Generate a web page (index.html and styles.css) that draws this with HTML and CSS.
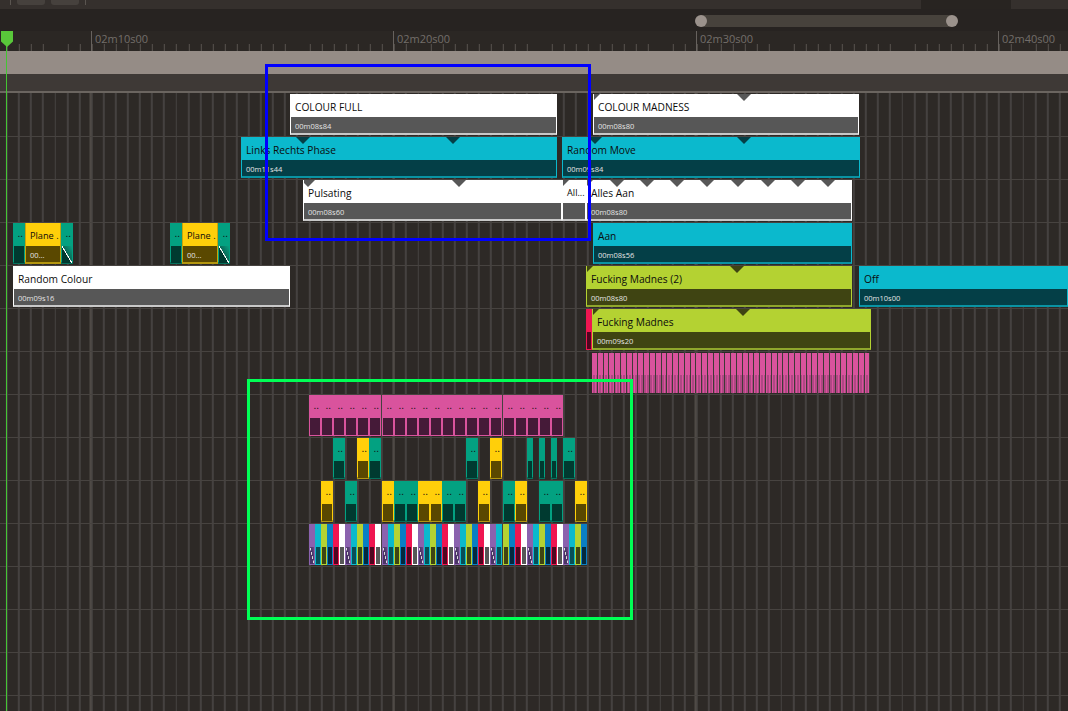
FILE: index.html
```html
<!DOCTYPE html>
<html lang="en">
<head>
<meta charset="utf-8">
<title>Timeline</title>
<link rel="stylesheet" href="styles.css">
</head>
<body>
<div class="app">
  <header class="topbar">
    <span class="sep"></span><span class="btn"></span><span class="btn"></span><span class="sep"></span>
    <span class="tab"></span>
  </header>
  <div class="scrollrow">
    <div class="scroller"><span class="knob"></span><span class="knob"></span></div>
  </div>
  <div class="ruler">
    <span class="mark" style="left:91px">02m10s00</span>
    <span class="mark" style="left:393px">02m20s00</span>
    <span class="mark" style="left:696px">02m30s00</span>
    <span class="mark" style="left:998px">02m40s00</span>
  </div>
  <div class="band"></div>
  <div class="band2"></div>
  <div class="tracks">
    <div class="row">
      <div class="clip white" style="left:290px;width:267px"><div class="name">COLOUR FULL</div><div class="time">00m08s84</div></div>
      <div class="clip white" style="left:593px;width:266px"><i class="corner"></i><i class="tri" style="left:151px"></i><div class="name">COLOUR MADNESS</div><div class="time">00m08s80</div></div>
    </div>
    <div class="row">
      <div class="clip cyan" style="left:241px;width:316px"><i class="tri" style="left:62px"></i><i class="tri" style="left:212px"></i><div class="name">Links Rechts Phase</div><div class="time">00m11s44</div></div>
      <div class="clip cyan" style="left:562px;width:298px"><i class="tri" style="left:33px"></i><i class="tri" style="left:182px"></i><div class="name">Random Move</div><div class="time">00m09s84</div></div>
    </div>
    <div class="row">
      <div class="clip white" style="left:303px;width:259px"><i class="corner wide"></i><i class="tri" style="left:156px"></i><div class="name">Pulsating</div><div class="time">00m08s60</div></div>
      <div class="clip white small" style="left:562px;width:24px"><i class="corner"></i><div class="name">All...</div><div class="time"></div></div>
      <div class="clip white" style="left:586px;width:266px"><i class="corner"></i><i class="tri" style="left:31px"></i><i class="tri" style="left:61px"></i><i class="tri" style="left:91px"></i><i class="tri" style="left:121px"></i><i class="tri" style="left:152px"></i><i class="tri" style="left:182px"></i><i class="tri" style="left:212px"></i><i class="tri" style="left:242px"></i><div class="name">Alles Aan</div><div class="time">00m08s80</div></div>
    </div>
    <div class="row">
      <div class="cell teal" style="left:13px;width:12px"><b>..</b><u></u></div>
      <div class="clip yellow small" style="left:25px;width:36px"><div class="name">Plane .</div><div class="time">00...</div></div>
      <div class="cell teal" style="left:61px;width:12px"><b>..</b><u class="slash"></u></div>
      <div class="cell teal" style="left:170px;width:12px"><b>..</b><u></u></div>
      <div class="clip yellow small" style="left:182px;width:36px"><div class="name">Plane .</div><div class="time">00...</div></div>
      <div class="cell teal" style="left:218px;width:12px"><b>..</b><u class="slash"></u></div>
      <div class="clip cyan" style="left:593px;width:259px"><div class="name">Aan</div><div class="time">00m08s56</div></div>
    </div>
    <div class="row">
      <div class="clip white" style="left:13px;width:277px"><div class="name">Random Colour</div><div class="time">00m09s16</div></div>
      <div class="clip lime" style="left:586px;width:266px"><i class="corner"></i><i class="tri" style="left:151px"></i><div class="name">Fucking Madnes (2)</div><div class="time">00m08s80</div></div>
      <div class="clip cyan" style="left:859px;width:209px"><div class="name">Off</div><div class="time">00m10s00</div></div>
    </div>
    <div class="row">
      <div class="cell red" style="left:586px;width:6px"><u></u></div>
      <div class="clip lime" style="left:592px;width:279px"><i class="corner"></i><i class="tri" style="left:151px"></i><div class="name">Fucking Madnes</div><div class="time">00m09s20</div></div>
    </div>
    <div class="row">
      <div class="comb" style="left:592px;width:278px"></div>
    </div>
    <div class="row">
      <div class="cell pink" style="left:309px;width:12px"><b>..</b><u></u></div>
      <div class="cell pink" style="left:321px;width:12px"><b>..</b><u></u></div>
      <div class="cell pink" style="left:333px;width:12px"><b>..</b><u></u></div>
      <div class="cell pink" style="left:345px;width:12px"><b>..</b><u></u></div>
      <div class="cell pink" style="left:357px;width:12px"><b>..</b><u></u></div>
      <div class="cell pink" style="left:369px;width:12px"><b>..</b><u></u></div>
      <div class="cell pink" style="left:382px;width:12px"><b>..</b><u></u></div>
      <div class="cell pink" style="left:394px;width:12px"><b>..</b><u></u></div>
      <div class="cell pink" style="left:406px;width:12px"><b>..</b><u></u></div>
      <div class="cell pink" style="left:418px;width:12px"><b>..</b><u></u></div>
      <div class="cell pink" style="left:430px;width:12px"><b>..</b><u></u></div>
      <div class="cell pink" style="left:442px;width:12px"><b>..</b><u></u></div>
      <div class="cell pink" style="left:454px;width:12px"><b>..</b><u></u></div>
      <div class="cell pink" style="left:466px;width:12px"><b>..</b><u></u></div>
      <div class="cell pink" style="left:478px;width:12px"><b>..</b><u></u></div>
      <div class="cell pink" style="left:490px;width:12px"><b>..</b><u></u></div>
      <div class="cell pink" style="left:503px;width:12px"><b>..</b><u></u></div>
      <div class="cell pink" style="left:515px;width:12px"><b>..</b><u></u></div>
      <div class="cell pink" style="left:527px;width:12px"><b>..</b><u></u></div>
      <div class="cell pink" style="left:539px;width:12px"><b>..</b><u></u></div>
      <div class="cell pink" style="left:551px;width:12px"><b>..</b><u></u></div>
    </div>
    <div class="row">
      <div class="cell teal" style="left:333px;width:12px"><b>..</b><u></u></div>
      <div class="cell yellow" style="left:357px;width:12px"><b>..</b><u></u></div>
      <div class="cell teal" style="left:369px;width:12px"><b>..</b><u></u></div>
      <div class="cell teal" style="left:466px;width:12px"><b>..</b><u></u></div>
      <div class="cell yellow" style="left:490px;width:12px"><b>..</b><u></u></div>
      <div class="cell teal" style="left:527px;width:6px"><u></u></div>
      <div class="cell teal" style="left:539px;width:6px"><u></u></div>
      <div class="cell teal" style="left:551px;width:6px"><u></u></div>
      <div class="cell teal" style="left:563px;width:12px"><b>..</b><u></u></div>
    </div>
    <div class="row">
      <div class="cell yellow" style="left:321px;width:12px"><b>..</b><u></u></div>
      <div class="cell teal" style="left:345px;width:12px"><b>..</b><u></u></div>
      <div class="cell yellow" style="left:382px;width:12px"><b>..</b><u></u></div>
      <div class="cell teal" style="left:394px;width:12px"><b>..</b><u></u></div>
      <div class="cell teal" style="left:406px;width:12px"><b>..</b><u></u></div>
      <div class="cell yellow" style="left:418px;width:12px"><b>..</b><u></u></div>
      <div class="cell yellow" style="left:430px;width:12px"><b>..</b><u></u></div>
      <div class="cell teal" style="left:442px;width:12px"><b>..</b><u></u></div>
      <div class="cell teal" style="left:454px;width:12px"><b>..</b><u></u></div>
      <div class="cell yellow" style="left:478px;width:12px"><b>..</b><u></u></div>
      <div class="cell teal" style="left:503px;width:12px"><b>..</b><u></u></div>
      <div class="cell yellow" style="left:515px;width:12px"><b>..</b><u></u></div>
      <div class="cell teal" style="left:539px;width:12px"><b>..</b><u></u></div>
      <div class="cell teal" style="left:551px;width:12px"><b>..</b><u></u></div>
      <div class="cell yellow" style="left:575px;width:12px"><b>..</b><u></u></div>
    </div>
    <div class="row">
      <div class="cell purple" style="left:309px;width:6px"><u class="slash"></u></div>
      <div class="cell cyan2" style="left:315px;width:6px"><u></u></div>
      <div class="cell lime2" style="left:321px;width:6px"><u></u></div>
      <div class="cell blue" style="left:327px;width:6px"><u></u></div>
      <div class="cell red" style="left:333px;width:6px"><u></u></div>
      <div class="cell white2" style="left:339px;width:6px"><u></u></div>
      <div class="cell purple" style="left:345px;width:6px"><u class="slash"></u></div>
      <div class="cell cyan2" style="left:351px;width:6px"><u></u></div>
      <div class="cell lime2" style="left:357px;width:6px"><u></u></div>
      <div class="cell blue" style="left:363px;width:6px"><u></u></div>
      <div class="cell red" style="left:369px;width:6px"><u></u></div>
      <div class="cell white2" style="left:375px;width:6px"><u></u></div>
      <div class="cell purple" style="left:382px;width:6px"><u class="slash"></u></div>
      <div class="cell cyan2" style="left:388px;width:6px"><u></u></div>
      <div class="cell lime2" style="left:394px;width:6px"><u></u></div>
      <div class="cell blue" style="left:400px;width:6px"><u></u></div>
      <div class="cell red" style="left:406px;width:6px"><u></u></div>
      <div class="cell white2" style="left:412px;width:6px"><u></u></div>
      <div class="cell purple" style="left:418px;width:6px"><u class="slash"></u></div>
      <div class="cell cyan2" style="left:424px;width:6px"><u></u></div>
      <div class="cell lime2" style="left:430px;width:6px"><u></u></div>
      <div class="cell blue" style="left:436px;width:6px"><u></u></div>
      <div class="cell red" style="left:442px;width:6px"><u></u></div>
      <div class="cell white2" style="left:448px;width:6px"><u></u></div>
      <div class="cell purple" style="left:454px;width:6px"><u class="slash"></u></div>
      <div class="cell cyan2" style="left:460px;width:6px"><u></u></div>
      <div class="cell lime2" style="left:466px;width:6px"><u></u></div>
      <div class="cell blue" style="left:472px;width:6px"><u></u></div>
      <div class="cell red" style="left:478px;width:6px"><u></u></div>
      <div class="cell white2" style="left:484px;width:6px"><u></u></div>
      <div class="cell purple" style="left:490px;width:6px"><u class="slash"></u></div>
      <div class="cell cyan2" style="left:496px;width:6px"><u></u></div>
      <div class="cell lime2" style="left:503px;width:6px"><u></u></div>
      <div class="cell blue" style="left:509px;width:6px"><u></u></div>
      <div class="cell red" style="left:515px;width:6px"><u></u></div>
      <div class="cell white2" style="left:521px;width:6px"><u></u></div>
      <div class="cell purple" style="left:527px;width:6px"><u class="slash"></u></div>
      <div class="cell cyan2" style="left:533px;width:6px"><u></u></div>
      <div class="cell lime2" style="left:539px;width:6px"><u></u></div>
      <div class="cell blue" style="left:545px;width:6px"><u></u></div>
      <div class="cell red" style="left:551px;width:6px"><u></u></div>
      <div class="cell white2" style="left:557px;width:6px"><u></u></div>
      <div class="cell purple" style="left:563px;width:6px"><u class="slash"></u></div>
      <div class="cell cyan2" style="left:569px;width:6px"><u></u></div>
      <div class="cell lime2" style="left:575px;width:6px"><u></u></div>
      <div class="cell blue" style="left:581px;width:6px"><u></u></div>
    </div>
    <div class="row"></div>
    <div class="row"></div>
    <div class="row"></div>
  </div>
  <div class="playhead"></div>
  <div class="box box-blue"></div>
  <div class="box box-green"></div>
</div>
</body>
</html>
```

FILE: styles.css
```css
* { box-sizing: border-box; }
html, body { margin: 0; height: 100%; background: #2d2926; overflow: hidden; }
.app { position: relative; width: 1068px; height: 711px; overflow: hidden; display: flex; flex-direction: column; font-family: "Open Sans", "Noto Sans", sans-serif; }

.topbar { height: 9px; background: #35302d; display: flex; align-items: flex-start; position: relative; padding-left: 10px; gap: 6px; }
.topbar .sep { width: 1px; height: 5px; background: #5a5550; }
.topbar .btn { width: 28px; height: 5px; background: #46413d; border-radius: 0 0 3px 3px; }
.topbar .tab { position: absolute; left: 921px; top: 0; width: 90px; height: 9px; background: #282421; }

.scrollrow { height: 22px; background: #272321; padding: 6px 0 0 701px; }
.scroller { width: 251px; height: 12px; background: #47423c; display: flex; justify-content: space-between; position: relative; }
.knob { width: 12px; height: 12px; border-radius: 50%; background: #9b928c; margin: 0 -6px; }

.ruler { height: 20px; position: relative; background-color: #2b2724;
  background-image: repeating-linear-gradient(to right, transparent 0, transparent 11.1px, #57524e 11.1px, #57524e 12.1px);
  background-size: 100% 7px; background-position: -4.2px 13px; background-repeat: repeat-x; }
.mark { position: absolute; top: 0; height: 20px; border-left: 1px solid #67625e; padding: 1px 0 0 3px; color: #736e6a; font-size: 11px; line-height: 14px; white-space: nowrap; }

.band { height: 23px; background: #958c86; }
.band2 { height: 17px; background: #3e3936; }

.tracks { flex: 1; border-top: 2px solid #6b6560; padding-top: 1px;
  background-color: #2d2926;
  background-image:
    repeating-linear-gradient(to right, transparent 0, transparent 300.5px, #4f4a46 300.5px, #4f4a46 302.5px),
    repeating-linear-gradient(to right, transparent 0, transparent 10.1px, #454140 10.1px, #454140 12.1px);
  background-position: -210.5px 0, -4.2px 0; }
.row { height: 43px; position: relative; border-bottom: 1px solid #474340; }

.clip { position: absolute; top: 0; height: 41px; display: flex; flex-direction: column; overflow: hidden; border-style: solid; border-width: 0 1px 2px 1px; }
.name { height: 23px; flex: none; padding: 6px 0 0 4px; font-size: 10.2px; line-height: 14px; white-space: nowrap; overflow: hidden; color: #0c0c0c; }
.small .name { font-size: 9.2px; }
.time { flex: 1; padding: 4px 0 0 4px; font-size: 7.5px; line-height: 11px; white-space: nowrap; overflow: hidden; color: #e4e4e4; }
.white { background: #fff; border-color: #fff #fff #c8c8c8; }
.white .time { background: #575757; }
.cyan { background: #0bb9cd; border-color: #0bb9cd #0bb9cd #0a93a3; }
.cyan .time { background: #043f47; }
.yellow.clip { background: #ffcf0a; border-color: #c9a40a #c9a40a #b3960f; }
.yellow.clip .time { background: #5a4800; }
.lime { background: #b4d232; border-color: #b4d232 #b4d232 #8fa62c; }
.lime .time { background: #3f4412; }

.tri { position: absolute; top: 0; width: 0; height: 0; margin-left: -8px; border-style: solid; border-width: 7px 7px 0 7px; border-color: #575757 transparent transparent transparent; }
.cyan .tri { border-top-color: #043f47; }
.lime .tri { border-top-color: #3f4412; }
.corner { position: absolute; left: -1px; top: 0; width: 0; height: 0; border-style: solid; border-width: 7px 7px 0 0; border-color: #575757 transparent transparent transparent; }
.corner.wide { left: -3px; border-width: 7px 7px 0 7px; }
.cyan .corner { border-top-color: #043f47; }
.lime .corner { border-top-color: #3f4412; }

.cell { position: absolute; top: 0; height: 41px; display: block; }
.cell u { position: absolute; left: 1px; right: 1px; top: 23px; bottom: 1px; display: block; text-decoration: none; }
.cell b { position: absolute; top: 6px; right: 2px; font-family: "Liberation Sans", sans-serif; font-size: 10px; line-height: 10px; font-weight: 400; color: #111; }
.teal { background: #03a181; box-shadow: inset 0 -2px 0 #06705c; }
.teal u { background: #003a30; }
.cell.yellow { background: #ffcf0a; box-shadow: inset 0 -2px 0 #b3960f; }
.cell.yellow u { background: #5a4800; }
.pink { background: #d9539d; }
.pink u { background: #451a38; }
.purple { background: #8b62ae; }
.purple u { background: #2d1a3e; }
.cyan2 { background: #0bb9cd; }
.cyan2 u { background: #074f58; }
.lime2 { background: #b4d232; }
.lime2 u { background: #3f4412; }
.blue { background: #0a7fc4; }
.blue u { background: #03293f; }
.red { background: #ef1651; }
.red u { background: #4f0620; }
.white2 { background: #fff; }
.white2 u { background: #575757; }
.purple u.slash { background: linear-gradient(to top right, #4a3366 0, #4a3366 45%, #ddd 47%, #ddd 53%, #4a3366 55%, #6a4a88 100%); }
.teal u.slash { background: linear-gradient(to top right, #003a30 0, #003a30 46%, #fff 47%, #fff 52%, #0b6a58 53%, #06a081 100%); }

.comb { position: absolute; top: 1px; height: 40px;
  background-image:
    repeating-linear-gradient(to right, transparent 0, transparent 4.8px, #3f3a37 4.8px, #3f3a37 5.8px),
    repeating-linear-gradient(to right, #d9539d 0, #d9539d 1.5px, #b04784 1.5px, #b04784 3px);
  background-size: 100% 100%, 100% 18px;
  background-position: 0 0, 0 22px;
  background-repeat: no-repeat;
  background-color: #d9539d; }

.playhead { position: absolute; left: 6px; top: 31px; bottom: 0; width: 1px; background: #45c434; }
.playhead::before { content: ""; position: absolute; left: -5px; top: 0; width: 12px; height: 16px; background: #59c83a; clip-path: polygon(0 0, 100% 0, 100% 65%, 50% 100%, 0 65%); }

.box { position: absolute; border-style: solid; border-width: 3px; }
.box-blue { left: 265px; top: 64px; width: 326px; height: 177px; border-color: #0000ff; }
.box-green { left: 247px; top: 379px; width: 386px; height: 241px; border-color: #00ff55; }
```
